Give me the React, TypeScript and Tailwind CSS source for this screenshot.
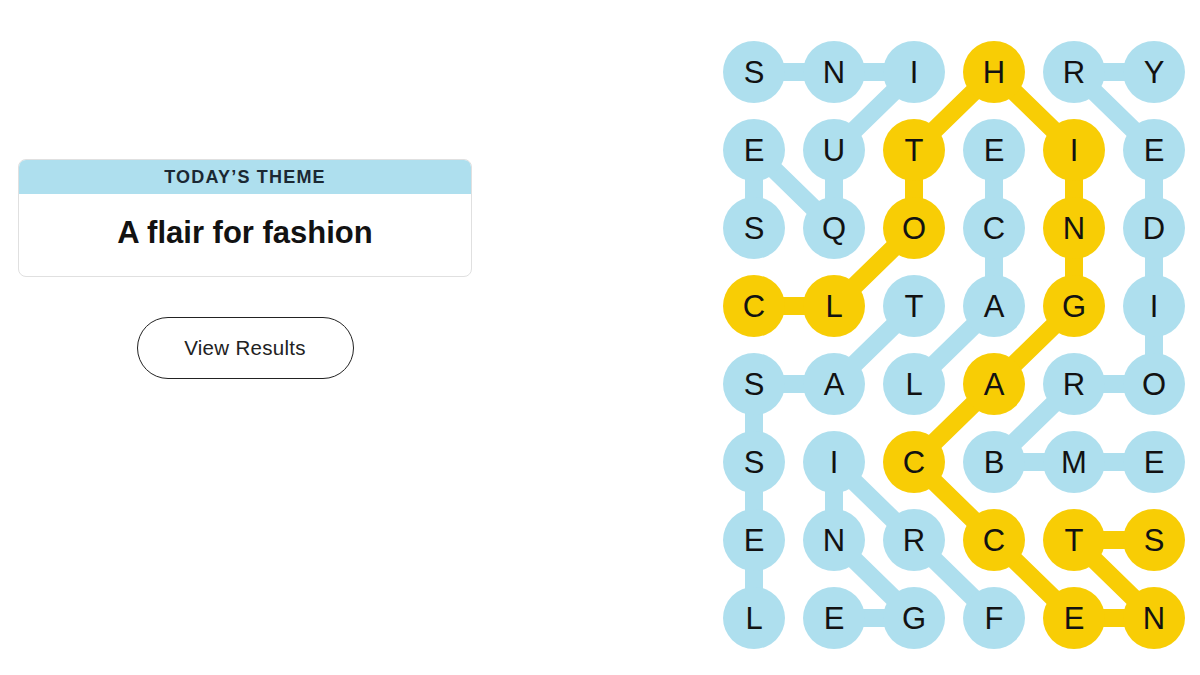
import React from "react";

const LETTERS = [
  "SNIHRY",
  "EUTEIE",
  "SQOCND",
  "CLTAGI",
  "SALARO",
  "SICBME",
  "ENRCTS",
  "LEGFEN",
];

type P = [number, number];

const BLUE_PATHS: P[][] = [
  [[2, 0], [1, 0], [2, 1], [1, 1], [0, 2], [0, 1], [0, 0]],
  [[5, 5], [5, 4], [5, 3], [4, 4], [4, 5], [3, 5], [2, 5], [1, 5], [0, 4], [0, 5]],
  [[4, 2], [3, 3], [2, 3], [1, 3]],
  [[3, 2], [4, 1], [4, 0], [5, 0], [6, 0], [7, 0]],
  [[7, 3], [6, 2], [5, 1], [6, 1], [7, 2], [7, 1]],
];

const YELLOW_PATHS: P[][] = [
  [[3, 0], [3, 1], [2, 2], [1, 2], [0, 3], [1, 4], [2, 4], [3, 4], [4, 3], [5, 2], [6, 3], [7, 4], [7, 5], [6, 4], [6, 5]],
];

const yellowSet = new Set(YELLOW_PATHS.flat().map(([r, c]) => `${r}-${c}`));

const D = 62;
const CX = (c: number) => D / 2 + c * 80;
const CY = (r: number) => D / 2 + r * 78;

function toPoints(path: P[]) {
  return path.map(([r, c]) => `${CX(c)},${CY(r)}`).join(" ");
}

function Board() {
  return (
    <div className="relative w-[462px] h-[608px]">
      <svg className="absolute inset-0" width={462} height={608} viewBox="0 0 462 608">
        {BLUE_PATHS.map((p, i) => (
          <polyline key={i} points={toPoints(p)} fill="none" stroke="#aedfee" strokeWidth={18} strokeLinejoin="round" strokeLinecap="round" />
        ))}
        {YELLOW_PATHS.map((p, i) => (
          <polyline key={i} points={toPoints(p)} fill="none" stroke="#f8cd05" strokeWidth={18} strokeLinejoin="round" strokeLinecap="round" />
        ))}
      </svg>
      <div className="relative grid grid-cols-6 gap-x-[18px] gap-y-[16px]">
        {LETTERS.flatMap((row, r) =>
          row.split("").map((ch, c) => {
            const y = yellowSet.has(`${r}-${c}`);
            return (
              <div
                key={`${r}-${c}`}
                className={
                  "w-[62px] h-[62px] rounded-full flex items-center justify-center text-[31px] leading-none text-[#121212] " +
                  (y ? "bg-[#f8cd05]" : "bg-[#aedfee]")
                }
                style={{ fontFamily: '"Liberation Sans", Arial, sans-serif' }}
              >
                {ch}
              </div>
            );
          })
        )}
      </div>
    </div>
  );
}

export default function App() {
  return (
    <div
      className="w-[1200px] h-[675px] bg-white flex overflow-hidden"
      style={{ fontFamily: '"Liberation Sans", Arial, sans-serif' }}
    >
      <div className="w-[472px] pl-[18px] pt-[159px] flex flex-col items-center">
        <div className="w-[454px] rounded-lg border border-[#e0e0e0] overflow-hidden">
          <div className="h-[34px] bg-[#aedfee] flex items-center justify-center text-[18px] font-bold tracking-[1.2px] text-[#1b2833]">
            TODAY’S THEME
          </div>
          <div className="h-[82px] flex items-center justify-center pb-[3px] text-[31px] font-bold text-[#121212]">
            A flair for fashion
          </div>
        </div>
        <button className="mt-[40px] w-[217px] h-[62px] rounded-full border border-[#222] bg-white text-[20.5px] tracking-[0.3px] text-[#222] flex items-center justify-center">
          View Results
        </button>
      </div>
      <div className="ml-[251px] mt-[41px]">
        <Board />
      </div>
    </div>
  );
}
